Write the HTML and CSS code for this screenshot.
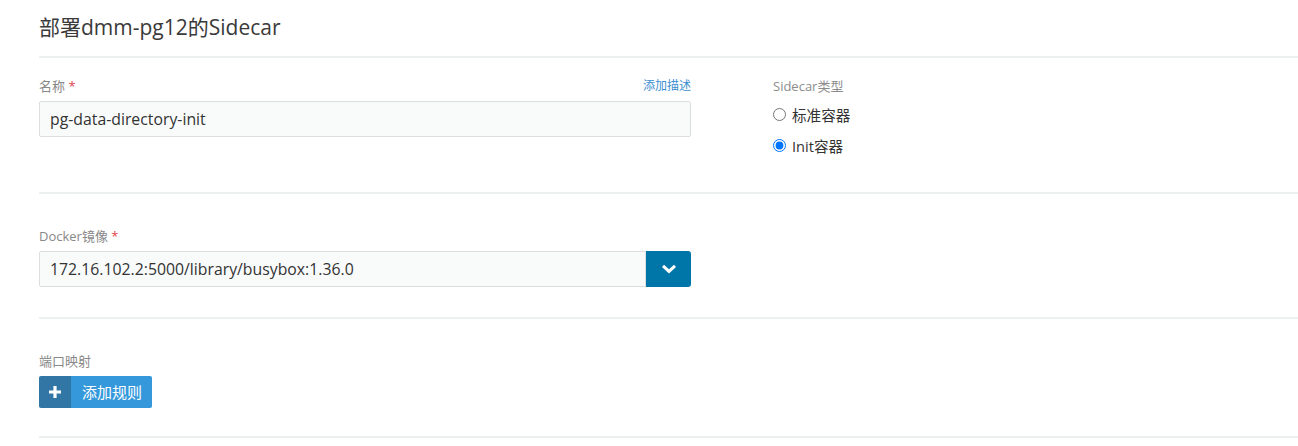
FILE: index.html
```html
<!DOCTYPE html>
<html lang="zh">
<head>
    <meta charset="UTF-8">
    <title>部署Sidecar</title>
    <link rel="stylesheet" href="styles.css">
</head>
<body>
<div class="page">
    <h1 class="title">部署dmm-pg12的Sidecar</h1>

    <!-- 名称 / 类型 -->
    <section class="block block-name">
        <div class="row">
            <div class="col-main">
                <div class="label-row">
                    <label class="label">名称 <span class="req">*</span></label>
                    <a class="add-desc">添加描述</a>
                </div>
                <input class="input" type="text" value="pg-data-directory-init">
            </div>
            <div class="col-side">
                <div class="label">Sidecar类型</div>
                <label class="radio"><input type="radio" name="kind"> 标准容器</label>
                <label class="radio"><input type="radio" name="kind" checked> Init容器</label>
            </div>
        </div>
    </section>

    <!-- 镜像 -->
    <section class="block block-image">
        <label class="label">Docker镜像 <span class="req">*</span></label>
        <div class="input-group">
            <input class="input" type="text" value="172.16.102.2:5000/library/busybox:1.36.0">
            <button class="drop-btn">
                <svg width="16" height="10" viewBox="0 0 16 10"><path d="M2 1.8l6 5.6 6-5.6" fill="none" stroke="#fff" stroke-width="3"/></svg>
            </button>
        </div>
    </section>

    <!-- 端口 -->
    <section class="block block-port">
        <div class="label">端口映射</div>
        <button class="add-btn">
            <span class="add-icon">
                <svg width="12" height="12" viewBox="0 0 12 12"><path d="M6 0v12M0 6h12" stroke="#fff" stroke-width="3.2"/></svg>
            </span>
            <span class="add-text">添加规则</span>
        </button>
    </section>
</div>
</body>
</html>
```

FILE: styles.css
```css
body {
    margin: 0;
    font-family: "Open Sans", "Noto Sans CJK SC", sans-serif;
    color: #333;
    background-color: #fff;
}

.page {
    padding-left: 39px;
}

.title {
    margin: 0;
    padding-top: 13px;
    height: 43px;
    font-size: 21px;
    font-weight: normal;
    line-height: 28px;
    color: #3a3a3a;
    border-bottom: 2px solid #edf0f0;
    box-sizing: content-box;
}

.block {
    border-bottom: 2px solid #edf0f0;
}

.block-name {
    height: 114px;
    padding-top: 20px;
}

.block-image {
    height: 89px;
    padding-top: 34px;
}

.block-port {
    height: 83px;
    padding-top: 34px;
}

.row {
    display: flex;
    gap: 82px;
}

.col-main {
    width: 652px;
}

.label-row {
    display: flex;
    justify-content: space-between;
}

.label {
    display: block;
    font-size: 13px;
    line-height: 16px;
    color: #888;
    margin-bottom: 7px;
}

.req {
    color: #e0454b;
}

.add-desc {
    font-size: 12px;
    line-height: 16px;
    color: #3d8fd1;
    cursor: pointer;
}

.input {
    display: block;
    width: 652px;
    height: 36px;
    box-sizing: border-box;
    padding: 0 10px;
    font-family: inherit;
    font-size: 15.8px;
    color: #333;
    background-color: #f9fbfb;
    border: 1px solid #dcdfe0;
    border-radius: 2px;
    outline: none;
}

.col-side .label {
    font-size: 13px;
    color: #8c8c8c;
    margin-bottom: 5px;
}

.radio {
    display: flex;
    align-items: center;
    gap: 6px;
    height: 31px;
    font-size: 14.6px;
    color: #333;
}

.radio input {
    margin: 0;
    width: 13px;
    height: 13px;
}

.input-group {
    display: flex;
    width: 652px;
}

.input-group .input {
    width: 607px;
    border-radius: 2px 0 0 2px;
}

.drop-btn {
    width: 45px;
    height: 36px;
    border: none;
    border-radius: 0 3px 3px 0;
    background-color: #0075a8;
    display: flex;
    align-items: center;
    justify-content: center;
    padding: 0;
    cursor: pointer;
}

.add-btn {
    display: flex;
    height: 32px;
    padding: 0;
    border: none;
    border-radius: 2px;
    overflow: hidden;
    cursor: pointer;
    font-family: inherit;
}

.add-icon {
    width: 32px;
    background-color: #3276a6;
    display: flex;
    align-items: center;
    justify-content: center;
}

.add-text {
    background-color: #3498db;
    color: #fff;
    font-size: 15px;
    line-height: 32px;
    padding: 0 10px 0 11px;
}
```
